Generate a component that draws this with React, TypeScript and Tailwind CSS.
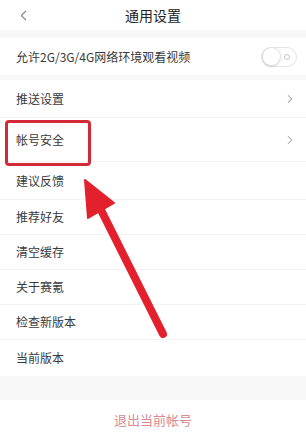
import { ChevronLeft, ChevronRight } from 'lucide-react';

const font = { fontFamily: '"Noto Sans CJK SC", "Noto Sans", sans-serif' };

function Row({ label, h, arrow, line = true }: { label: string; h: string; arrow?: boolean; line?: boolean }) {
  return (
    <div className={`flex items-center justify-between bg-white pl-4 pr-[9px] ${h} ${line ? 'border-b border-[#f3f3f3]' : ''}`}>
      <span className="text-[12px] text-[#3a3a3a]">{label}</span>
      {arrow && <ChevronRight className="w-[14px] h-[14px] text-[#a0a0a0]" strokeWidth={1.75} />}
    </div>
  );
}

export default function App() {
  return (
    <div className="relative w-[306px] h-[434px] bg-[#f8f8f8] overflow-hidden" style={font}>
      {/* Header */}
      <div className="relative h-[30px] bg-white flex items-center justify-center">
        <ChevronLeft className="absolute left-[15px] w-[17px] h-[17px] text-[#888]" strokeWidth={1.5} />
        <span className="text-[14px] text-[#222]">通用设置</span>
      </div>

      <div className="h-[8px]" />

      {/* 2G/3G/4G toggle */}
      <div className="flex items-center justify-between bg-white pl-4 pr-[9px] h-[37px]">
        <span className="text-[12px] text-[#3a3a3a]">允许2G/3G/4G网络环境观看视频</span>
        <div className="relative w-[36px] h-[20px] rounded-full border border-[#e4e4e4] bg-white flex items-center">
          <div className="w-[19px] h-[19px] rounded-full bg-white border border-[#e0e0e0] shadow-[0_1px_2px_rgba(0,0,0,0.12)]" />
          <div className="absolute right-[6px] w-[6px] h-[6px] rounded-full border border-[#c8c8c8]" />
        </div>
      </div>

      <div className="h-[5px]" />

      <Row label="推送设置" h="h-[38px]" arrow />
      <Row label="帐号安全" h="h-[44px]" arrow />
      <Row label="建议反馈" h="h-[38px]" />
      <Row label="推荐好友" h="h-[35px]" />
      <Row label="清空缓存" h="h-[35px]" />
      <Row label="关于赛氪" h="h-[35px]" />
      <Row label="检查新版本" h="h-[35px]" />
      <Row label="当前版本" h="h-[36px]" line={false} />

      <div className="h-[24px]" />

      <div className="h-[40px] bg-white flex items-center justify-center">
        <span className="text-[13px] text-[#d98a92]">退出当前帐号</span>
      </div>

      {/* Annotation box */}
      <div className="absolute left-[5px] top-[120px] w-[86px] h-[46px] border-[3px] border-[#d42a38] rounded-[4px]" />

      {/* Annotation arrow */}
      <svg className="absolute left-0 top-0" width="306" height="434" viewBox="0 0 306 434">
        <line x1="163" y1="334" x2="99" y2="206" stroke="#e3212d" strokeWidth="8" strokeLinecap="round" />
        <polygon points="85,180 114,203 88,218" fill="#e3212d" stroke="#e3212d" strokeWidth="2" strokeLinejoin="round" />
      </svg>
    </div>
  );
}
